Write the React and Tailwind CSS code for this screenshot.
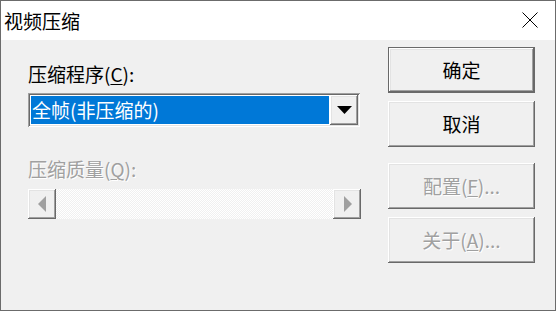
import React from "react";

const raised =
  "bg-[#f0f0f0] shadow-[inset_-1px_-1px_#696969,inset_1px_1px_#ffffff,inset_-2px_-2px_#a0a0a0,inset_2px_2px_#e3e3e3]";

const DialogButton = ({ children, isDefault, disabled, className = "" }) => (
  <button
    type="button"
    className={`flex h-[46px] w-[147px] items-center justify-center text-[19px] ${raised} ${
      isDefault ? "border border-[#696969]" : ""
    } ${disabled ? "text-[#a0a0a0] [text-shadow:1px_1px_0_#ffffff]" : "text-black"} ${className}`}
  >
    {children}
  </button>
);

const Arrow = ({ dir }) => (
  <svg width="9" height="16" viewBox="0 0 9 16">
    {dir === "left" ? (
      <polygon points="8,0 8,16 0,8" fill="#a0a0a0" />
    ) : (
      <polygon points="1,0 1,16 9,8" fill="#a0a0a0" />
    )}
  </svg>
);

const App = () => {
  return (
    <div className="h-[311px] w-[557px] bg-white">
      <div
        className="flex h-[311px] w-[556px] flex-col border border-[#6b6b6b] bg-[#f0f0f0]"
        style={{ fontFamily: '"Noto Sans CJK SC", "Noto Sans", sans-serif' }}
      >
        {/* title bar */}
        <div className="flex h-[39px] items-center justify-between bg-white pl-[3px] pr-[17px]">
          <span className="text-[19px] leading-[24px] text-black">视频压缩</span>
          <svg width="16" height="16" viewBox="0 0 16 16" className="mb-[1px]">
            <path d="M0.5 0.5 L15.5 15.5 M15.5 0.5 L0.5 15.5" stroke="#000" strokeWidth="1" />
          </svg>
        </div>

        <div className="flex flex-1 pl-[27px]">
          {/* left column */}
          <div className="flex w-[333px] flex-col pt-[22px]">
            <div className="text-[19px] leading-[24px] text-black">
              压缩程序(<span className="underline underline-offset-2">C</span>):
            </div>
            <div className="mt-[7px] flex h-[34px] w-[332px] bg-white p-[2px] shadow-[inset_1px_1px_#a0a0a0,inset_-1px_-1px_#ffffff,inset_2px_2px_#696969,inset_-2px_-2px_#e3e3e3]">
              <div className="m-[1px] flex flex-1 items-center bg-[#0078d7] pl-[1px] text-[19px] leading-[24px] text-white">
                全帧(非压缩的)
              </div>
              <div className={`flex w-[28px] items-center justify-center ${raised}`}>
                <svg width="15" height="8" viewBox="0 0 15 8">
                  <polygon points="0,0 15,0 7.5,8" fill="#000" />
                </svg>
              </div>
            </div>

            <div className="mt-[30px] text-[19px] leading-[24px] text-[#a0a0a0] [text-shadow:1px_1px_0_#ffffff]">
              压缩质量(<span className="underline underline-offset-2">Q</span>):
            </div>
            <div className="mt-[8px] flex h-[30px] w-[333px] bg-[repeating-conic-gradient(#ffffff_0_25%,#f0f0f0_0_50%)] bg-[length:2px_2px]">
              <div className={`flex w-[28px] items-center justify-center ${raised}`}>
                <Arrow dir="left" />
              </div>
              <div className="flex-1" />
              <div className={`flex w-[28px] items-center justify-center ${raised}`}>
                <Arrow dir="right" />
              </div>
            </div>
          </div>

          {/* right column */}
          <div className="ml-[27px] flex flex-col pt-[7px]">
            <DialogButton isDefault>确定</DialogButton>
            <DialogButton className="mt-[8px]">取消</DialogButton>
            <DialogButton disabled className="mt-[16px]">
              配置(<span className="underline underline-offset-2">F</span>)...
            </DialogButton>
            <DialogButton disabled className="mt-[8px]">
              关于(<span className="underline underline-offset-2">A</span>)...
            </DialogButton>
          </div>
        </div>
      </div>
    </div>
  );
};

export default App;
